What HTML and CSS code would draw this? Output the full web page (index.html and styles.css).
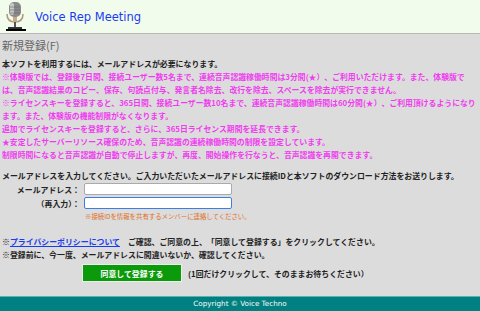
FILE: index.html
```html
<!DOCTYPE html>
<html lang="ja">
<head>
    <meta charset="UTF-8">
    <title>Voice Rep Meeting - 新規登録</title>
    <link rel="stylesheet" href="styles.css">
</head>
<body>
    <header class="top-bar">
        <svg class="mic-icon" width="22" height="31" viewBox="0 0 22 31">
            <rect x="5" y="1" width="12" height="15" rx="5" fill="#8a8a8a"/>
            <rect x="6" y="2" width="4" height="12" rx="2" fill="#c9c9c9"/>
            <line x1="6" y1="6" x2="16" y2="6" stroke="#666" stroke-width="0.6"/>
            <line x1="6" y1="9" x2="16" y2="9" stroke="#666" stroke-width="0.6"/>
            <line x1="6" y1="12" x2="16" y2="12" stroke="#666" stroke-width="0.6"/>
            <path d="M3 13 Q3 21 11 21 Q19 21 19 13" fill="none" stroke="#b59a7a" stroke-width="1.6"/>
            <rect x="9" y="16" width="4" height="5" fill="#c8a888"/>
            <rect x="10" y="21" width="2" height="5" fill="#555"/>
            <rect x="4" y="26" width="14" height="2" fill="#333"/>
            <rect x="2" y="28" width="20" height="2" fill="#000"/>
        </svg>
        <span class="app-title">Voice Rep Meeting</span>
    </header>

    <main class="content">
        <h2 class="page-title">新規登録(F)</h2>
        <p class="lead">本ソフトを利用するには、メールアドレスが必要になります。</p>
        <p class="notice">
            ※体験版では、登録後7日間、接続ユーザー数5名まで、連続音声認識稼働時間は3分間(★）、ご利用いただけます。また、体験版では、音声認識結果のコピー、保存、句読点付与、発言者名除去、改行を除去、スペースを除去が実行できません。<br>
            ※ライセンスキーを登録すると、365日間、接続ユーザー数10名まで、連続音声認識稼働時間は60分間(★）、ご利用頂けるようになります。また、体験版の機能制限がなくなります。<br>
            追加でライセンスキーを登録すると、さらに、365日ライセンス期間を延長できます。<br>
            ★安定したサーバーリソース確保のため、音声認識の連続稼働時間の制限を設定しています。<br>
            制限時間になると音声認識が自動で停止しますが、再度、開始操作を行なうと、音声認識を再開できます。
        </p>

        <p class="lead form-intro">メールアドレスを入力してください。ご入力いただいたメールアドレスに接続IDと本ソフトのダウンロード方法をお送りします。</p>
        <div class="form-grid">
            <label class="form-label" for="mail">メールアドレス：</label>
            <input class="form-input" id="mail" type="text">
            <label class="form-label" for="mail2">（再入力）：</label>
            <input class="form-input focused" id="mail2" type="text">
            <span></span>
            <span class="form-note">※接続IDを情報を共有するメンバーに連絡してください。</span>
        </div>

        <p class="lead agree">※<a href="#" class="policy-link">プライバシーポリシーについて</a>　ご確認、ご同意の上、「同意して登録する」をクリックしてください。<br>
        ※登録前に、今一度、メールアドレスに間違いないか、確認してください。</p>
        <div class="submit-row">
            <button class="submit-button">同意して登録する</button>
            <span class="submit-hint">(1回だけクリックして、そのままお待ちください）</span>
        </div>
    </main>

    <footer class="bottom-bar">Copyright © Voice Techno</footer>
</body>
</html>
```

FILE: styles.css
```css
body {
    margin: 0;
    background-color: #dcdcdc;
    font-family: "Noto Sans CJK JP", sans-serif;
    height: 311px;
    display: flex;
    flex-direction: column;
    overflow: hidden;
}
.top-bar {
    height: 33px;
    background-color: #f2fcec;
    border-bottom: 1px solid #b8b8b8;
    display: flex;
    align-items: center;
    padding-left: 4px;
}
.app-title {
    font-family: "DejaVu Sans", sans-serif;
    font-size: 11.5px;
    color: #1a3cf0;
    margin-left: 9px;
}
.content {
    flex: 1;
    padding: 0 0 0 2px;
}
.page-title {
    font-size: 11px;
    font-weight: normal;
    color: #666;
    line-height: 14px;
    margin: 4px 0 5px;
}
.lead {
    font-size: 7.9px;
    font-weight: bold;
    color: #222;
    line-height: 13px;
    margin: 0;
}
.notice {
    font-size: 7.85px;
    font-weight: bold;
    color: #f03cf0;
    line-height: 13px;
    margin: 0;
}
.form-intro {
    margin-top: 8px;
}
.form-grid {
    display: grid;
    grid-template-columns: 78px 148px;
    column-gap: 4px;
    row-gap: 2px;
    align-items: center;
    margin-top: 1px;
}
.form-label {
    font-size: 7.9px;
    font-weight: bold;
    color: #222;
    text-align: right;
}
.form-input {
    height: 12px;
    box-sizing: border-box;
    border: 1px solid #aaa;
    border-radius: 2px;
    background: #fff;
    padding: 0;
}
.form-input.focused {
    border-color: #3c7fe0;
}
.form-note {
    font-size: 6.4px;
    color: #e0702a;
    line-height: 12px;
    padding-left: 1px;
    white-space: nowrap;
}
.agree {
    margin-top: 12px;
}
.policy-link {
    color: #1a3cf0;
}
.submit-row {
    display: flex;
    align-items: center;
    margin-top: 3px;
    padding-left: 80px;
}
.submit-button {
    width: 100px;
    height: 18px;
    background-color: #0a9a0a;
    color: #fff;
    border: 1px solid #eee;
    font-family: "Noto Sans CJK JP", sans-serif;
    font-size: 7.9px;
    font-weight: bold;
    padding: 0;
}
.submit-hint {
    font-size: 7.9px;
    font-weight: bold;
    color: #222;
    margin-left: 6px;
}
.bottom-bar {
    height: 14px;
    background-color: #008080;
    border-top: 1px solid #5fb0b0;
    color: #fff;
    font-family: "DejaVu Sans", sans-serif;
    font-size: 7.2px;
    line-height: 14px;
    text-align: center;
}
```
